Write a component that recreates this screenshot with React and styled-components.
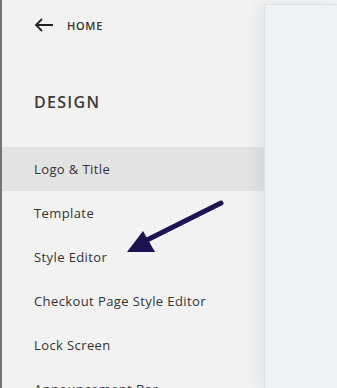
import React from 'react';
import styled, { createGlobalStyle } from 'styled-components';

const Global = createGlobalStyle`
  html, body {
    margin: 0;
    padding: 0;
    background: #f2f2f2;
    overflow: hidden;
  }
  body {
    font-family: "Open Sans", "Liberation Sans", sans-serif;
  }
`;

const Page = styled.div`
  position: relative;
  display: flex;
  width: 337px;
  height: 388px;
  overflow: hidden;
  background: #f2f2f2;
`;

const Sidebar = styled.nav`
  width: 262px;
  flex-shrink: 0;
  border-left: 2px solid #747474;
  display: flex;
  flex-direction: column;
  & > * {
    flex-shrink: 0;
  }
`;

const Back = styled.div`
  display: flex;
  align-items: center;
  gap: 13px;
  height: 50px;
  padding-left: 32px;
  color: #333;
  font-size: 11px;
  font-weight: 600;
  letter-spacing: 0.7px;
`;

const Heading = styled.h2`
  margin: 0;
  height: 97px;
  display: flex;
  align-items: center;
  padding-left: 32px;
  padding-top: 7px;
  box-sizing: border-box;
  font-size: 16px;
  font-weight: 600;
  letter-spacing: 1.3px;
  color: #3a3a3a;
`;

const Item = styled.div`
  height: 44px;
  display: flex;
  align-items: center;
  padding-left: 32px;
  font-size: 13px;
  color: #333;
  letter-spacing: 0.4px;
  background: ${p => (p.active ? '#e3e3e3' : 'transparent')};
`;

const Main = styled.div`
  flex: 1;
  padding-top: 4px;
`;

const Panel = styled.div`
  height: 100%;
  background: #edf1f4;
  border-left: 1px solid #e0e3e5;
  border-top: 1px solid #e0e3e5;
  box-shadow: -6px 0 14px rgba(0, 0, 0, 0.06);
`;

const Pointer = styled.svg`
  position: absolute;
  left: 120px;
  top: 195px;
`;

const items = [
  'Logo & Title',
  'Template',
  'Style Editor',
  'Checkout Page Style Editor',
  'Lock Screen',
  'Announcement Bar',
];

const App = () => (
  <Page>
    <Global />
    <Sidebar>
      <Back>
        <svg width="20" height="14" viewBox="0 0 20 14" fill="none" stroke="#222" strokeWidth="1.8">
          <path d="M19 7H2M8 1L2 7l6 6" />
        </svg>
        HOME
      </Back>
      <Heading>DESIGN</Heading>
      {items.map((name, i) => (
        <Item key={name} active={i === 0}>{name}</Item>
      ))}
    </Sidebar>
    <Main>
      <Panel />
    </Main>
    <Pointer width="110" height="65" viewBox="120 195 110 65">
      <path d="M221 203L147 240" stroke="#1d1150" strokeWidth="5" strokeLinecap="round" />
      <path d="M127 252L143 231L155 252Z" fill="#1d1150" />
    </Pointer>
  </Page>
);

export default App;
